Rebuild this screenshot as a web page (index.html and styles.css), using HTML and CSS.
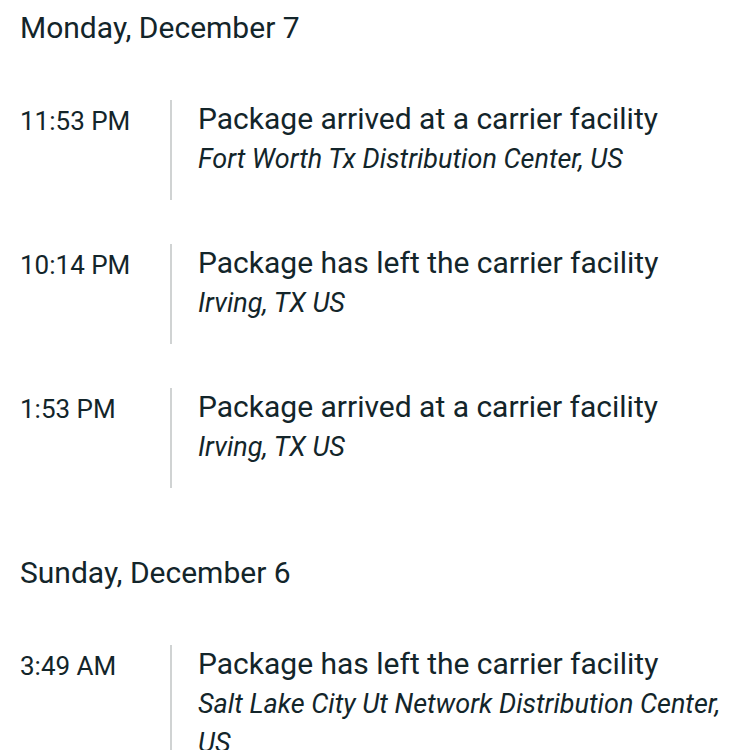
FILE: index.html
```html
<!DOCTYPE html>
<html lang="en">
<head>
    <meta charset="UTF-8">
    <meta name="viewport" content="width=device-width, initial-scale=1.0">
    <title>Tracking</title>
    <link rel="stylesheet" href="styles.css">
</head>
<body>
<div class="tracking">
    <div class="day">
        <h2 class="day-title">Monday, December 7</h2>
        <div class="event">
            <div class="time">11:53 PM</div>
            <div class="detail">
                <div class="status">Package arrived at a carrier facility</div>
                <div class="place">Fort Worth Tx Distribution Center, US</div>
            </div>
        </div>
        <div class="event">
            <div class="time">10:14 PM</div>
            <div class="detail">
                <div class="status">Package has left the carrier facility</div>
                <div class="place">Irving, TX US</div>
            </div>
        </div>
        <div class="event">
            <div class="time">1:53 PM</div>
            <div class="detail">
                <div class="status">Package arrived at a carrier facility</div>
                <div class="place">Irving, TX US</div>
            </div>
        </div>
    </div>

    <div class="day">
        <h2 class="day-title">Sunday, December 6</h2>
        <div class="event">
            <div class="time">3:49 AM</div>
            <div class="detail">
                <div class="status">Package has left the carrier facility</div>
                <div class="place">Salt Lake City Ut Network Distribution Center, US</div>
            </div>
        </div>
    </div>
</div>
</body>
</html>
```

FILE: styles.css
```css
* {
    margin: 0;
    padding: 0;
    box-sizing: border-box;
}

body {
    background-color: #fff;
    color: #13252a;
    font-family: Roboto, "Liberation Sans", sans-serif;
}

.tracking {
    padding: 10px 20px 0 20px;
    width: 750px;
}

.day {
    display: flex;
    flex-direction: column;
    gap: 44px;
    margin-bottom: 67px;
}

.day-title {
    font-size: 30px;
    font-weight: 400;
    line-height: 36px;
    margin-bottom: 10px;
}

.event {
    display: flex;
}

.time {
    width: 150px;
    flex-shrink: 0;
    font-size: 26px;
    line-height: 36px;
    padding-top: 3px;
}

.detail {
    flex: 1;
    border-left: 2px solid #d0d3d3;
    padding: 0 0 21px 26px;
}

.status {
    font-size: 30px;
    line-height: 38px;
}

.place {
    margin-top: 2px;
    font-size: 27px;
    font-style: italic;
    line-height: 39px;
}
```
